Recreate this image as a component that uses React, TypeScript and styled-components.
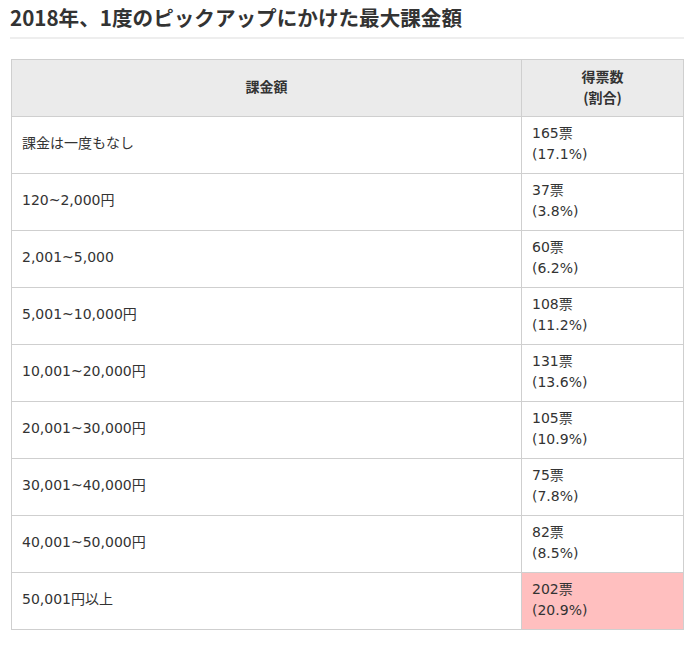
import React from "react";
import styled, { createGlobalStyle } from "styled-components";

const Global = createGlobalStyle`
  html, body { margin: 0; padding: 0; background: #fff; }
  body {
    font-family: "DejaVu Sans", "Noto Sans CJK JP", sans-serif;
    color: #333;
  }
`;

const Page = styled.div`
  padding: 0 13px 0 10px;
`;

const Title = styled.h2`
  margin: 0;
  padding: 4px 0 6px 0;
  font-family: "Noto Sans CJK JP", "Noto Sans", sans-serif;
  font-size: 20.6px;
  line-height: 27px;
  font-weight: bold;
  color: #333;
  border-bottom: 2px solid #eeeeee;
`;

const Table = styled.table`
  margin: 20px 0 0 1px;
  width: 673px;
  border-collapse: collapse;
  font-size: 14px;
  line-height: 21px;
`;

const Th = styled.th<{ $w?: number }>`
  background: #ebebeb;
  border: 1px solid #cfcfcf;
  height: 53px;
  padding: 0 10px 3px;
  font-family: "Noto Sans CJK JP", sans-serif;
  font-weight: bold;
  text-align: center;
  vertical-align: middle;
  ${(p) => (p.$w ? `width: ${p.$w}px;` : "")}
`;

const Td = styled.td<{ $hl?: boolean }>`
  border: 1px solid #cfcfcf;
  height: 53px;
  padding: 0 10px 3px;
  text-align: left;
  vertical-align: middle;
  background: ${(p) => (p.$hl ? "#ffbfbf" : "#fff")};
`;

const rows: [string, string, string][] = [
  ["課金は一度もなし", "165票", "(17.1%)"],
  ["120~2,000円", "37票", "(3.8%)"],
  ["2,001~5,000", "60票", "(6.2%)"],
  ["5,001~10,000円", "108票", "(11.2%)"],
  ["10,001~20,000円", "131票", "(13.6%)"],
  ["20,001~30,000円", "105票", "(10.9%)"],
  ["30,001~40,000円", "75票", "(7.8%)"],
  ["40,001~50,000円", "82票", "(8.5%)"],
  ["50,001円以上", "202票", "(20.9%)"],
];

export default function App() {
  return (
    <Page>
      <Global />
      <Title>2018年、1度のピックアップにかけた最大課金額</Title>
      <Table>
        <thead>
          <tr>
            <Th>課金額</Th>
            <Th $w={141}>
              得票数
              <br />
              (割合)
            </Th>
          </tr>
        </thead>
        <tbody>
          {rows.map((r, i) => (
            <tr key={i}>
              <Td>{r[0]}</Td>
              <Td $hl={i === rows.length - 1}>
                {r[1]}
                <br />
                {r[2]}
              </Td>
            </tr>
          ))}
        </tbody>
      </Table>
    </Page>
  );
}
